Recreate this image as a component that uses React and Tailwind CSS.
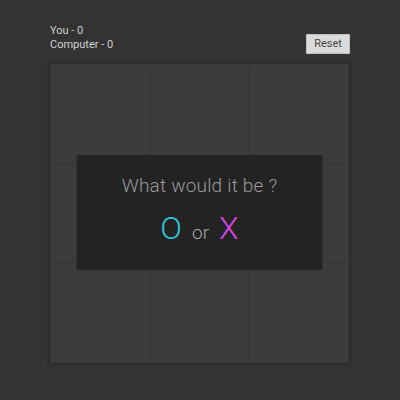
import React from 'react';

const cells = [0, 1, 2, 3, 4, 5, 6, 7, 8];

export default function App() {
  return (
    <div className="w-[400px] h-[400px] bg-[#333333] font-['Roboto',sans-serif] overflow-hidden">
      <div className="w-[300px] mx-auto pt-[24px]">
        {/* Score & reset */}
        <div className="flex justify-between items-start h-[39px]">
          <div className="text-[11px] leading-[14px] text-[#d0d0d0]">
            <div>You - 0</div>
            <div>Computer - 0</div>
          </div>
          <button className="mt-[10px] w-[44px] h-[20px] bg-[#dcdcdc] border border-[#bdbdbd] text-[11px] text-[#444]">
            Reset
          </button>
        </div>

        {/* Board */}
        <div className="relative -ml-[1px] w-[301px] h-[301px] border border-[#2e2e2e] shadow-[0_0_3px_rgba(0,0,0,0.35)] grid grid-cols-3 grid-rows-3 bg-[#3c3c3c]">
          {cells.map((c) => (
            <div key={c} className="border border-[#383838] bg-[#3c3c3c]" />
          ))}

          <div className="absolute left-[27px] top-[91px] w-[245px] h-[114px] bg-[#232323] shadow-[0_1px_2px_rgba(0,0,0,0.4)] flex flex-col items-center">
            <div className="mt-[17px] text-[19px] font-light text-[#9a9a9a] tracking-[0.2px]">
              What would it be ?
            </div>
            <div className="mt-[3px] flex items-baseline gap-[10px]">
              <span className="text-[32px] font-light text-[#2ec4d6]">O</span>
              <span className="text-[19px] font-light text-[#a8a8a8]">or</span>
              <span className="text-[32px] font-light text-[#d845ea]">X</span>
            </div>
          </div>
        </div>
      </div>
    </div>
  );
}
